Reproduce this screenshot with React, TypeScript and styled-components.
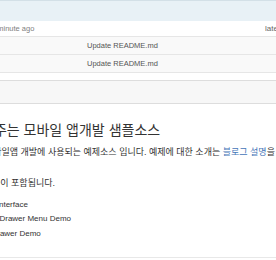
import styled, { createGlobalStyle } from "styled-components";

const GlobalStyle = createGlobalStyle`
  html, body {
    margin: 0;
    padding: 0;
    background: #ffffff;
    overflow: hidden;
  }
  body {
    font-family: "Liberation Sans", "Noto Sans CJK KR", Arial, sans-serif;
    color: #333333;
  }
`;

const Viewport = styled.div`
  width: 276px;
  height: 260px;
  overflow: hidden;
`;

const Sheet = styled.div`
  width: 460px;
  margin-left: -48px;
`;

const FileBox = styled.div`
  border-top: 1px solid #d3e0e7;
  font-size: 7.5px;
`;

const Tease = styled.div`
  height: 20px;
  background: #e8f1f6;
`;

const TeaseRow = styled.div`
  display: grid;
  grid-template-columns: 1fr 147px;
  align-items: center;
  height: 15px;
  padding-left: 39px;
  background: #ffffff;
  border-bottom: 1px solid #e6e6e6;
  color: #808080;
  white-space: nowrap;
`;

const Latest = styled.span`
  color: #666666;
  font-size: 8px;
  overflow: hidden;
`;

const FileRow = styled.div`
  display: flex;
  align-items: center;
  height: 17px;
  padding-left: 135px;
  background: #f9f9f9;
  border-bottom: 1px solid #e6e6e6;
  color: #555555;
  white-space: nowrap;
`;

const ReadmeBox = styled.div`
  margin-top: 7px;
  border: 1px solid #dddddd;
  border-left: none;
  border-right: none;
  border-bottom-color: #e8e8e8;
  height: 176px;
`;

const ReadmeHeader = styled.div`
  height: 22px;
  background: #f7f7f7;
  border-bottom: 1px solid #dddddd;
`;

const Markdown = styled.div`
  padding: 18px 0 0 0;
  margin-left: -0.6px;
  white-space: nowrap;
`;

const Heading = styled.h2`
  margin: 0 0 8px;
  font-size: 14px;
  line-height: 16px;
  font-weight: 400;
  color: #333333;
`;

const Para = styled.p<{ $gap: number }>`
  margin: 0 0 ${(p) => p.$gap}px;
  font-size: 9px;
  line-height: 13px;
  color: #333333;
`;

const Link = styled.a`
  color: #4575b8;
  text-decoration: none;
`;

const List = styled.ul`
  margin: 0;
  padding-left: 21.8px;
  font-size: 8px;
  color: #333333;
`;

const Item = styled.li`
  line-height: 12.8px;
  & + & {
    margin-top: 1.6px;
  }
`;

const items = ["Touch Interface", "Sliding Drawer Menu Demo", "Side Drawer Demo"];

export default function App() {
  return (
    <Viewport>
      <GlobalStyle />
      <Sheet>
        <FileBox>
          <Tease />
          <TeaseRow>
            <span>1 minute ago</span>
            <Latest>latest commit 4f2a1c0</Latest>
          </TeaseRow>
          <FileRow>Update README.md</FileRow>
          <FileRow>Update README.md</FileRow>
        </FileBox>
        <ReadmeBox>
          <ReadmeHeader />
          <Markdown>
            <Heading>잘 도와주는 모바일 앱개발 샘플소스</Heading>
            <Para $gap={18}>
              Android 모바일앱 개발에 사용되는 예제소스 입니다. 예제에 대한 소개는{" "}
              <Link href="#">블로그 설명</Link>을 참고하세요.
            </Para>
            <Para $gap={9}>3개의 예제들이 포함됩니다.</Para>
            <List>
              {items.map((label) => (
                <Item key={label}>{label}</Item>
              ))}
            </List>
          </Markdown>
        </ReadmeBox>
      </Sheet>
    </Viewport>
  );
}
